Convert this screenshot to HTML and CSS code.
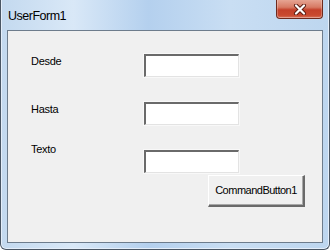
FILE: index.html
```html
<!DOCTYPE html>
<html lang="es">
<head>
  <meta charset="UTF-8">
  <title>UserForm1</title>
  <link rel="stylesheet" href="styles.css">
</head>
<body>
  <div class="window">
    <div class="titlebar">
      <span class="title">UserForm1</span>
      <button class="close" aria-label="Cerrar">
        <svg width="14" height="11" viewBox="0 0 14 11">
          <path d="M3 1.5 L11 9.5 M11 1.5 L3 9.5" stroke="#5a1a10" stroke-width="4" stroke-linecap="round"/>
          <path d="M3 1.5 L11 9.5 M11 1.5 L3 9.5" stroke="#fff" stroke-width="2.2" stroke-linecap="round"/>
        </svg>
      </button>
    </div>

    <div class="client">
      <div class="row">
        <label class="lbl" for="desde">Desde</label>
        <input class="txt" type="text" id="desde">
      </div>
      <div class="row">
        <label class="lbl" for="hasta">Hasta</label>
        <input class="txt" type="text" id="hasta">
      </div>
      <div class="row row-last">
        <label class="lbl lbl-up" for="texto">Texto</label>
        <input class="txt" type="text" id="texto">
      </div>
      <div class="actions">
        <button class="cmd">CommandButton1</button>
      </div>
    </div>
  </div>
</body>
</html>
```

FILE: styles.css
```css
body {
  margin: 0;
  width: 330px;
  height: 250px;
  overflow: hidden;
  background: #fff;
}

.window {
  box-sizing: border-box;
  width: 330px;
  height: 250px;
  border: 1px solid #4a5664;
  border-top: none;
  border-radius: 0 0 6px 6px;
  padding: 0 6px 6px 6px;
  background: linear-gradient(90deg, #c3d9ef 0%, #d9e8f7 22%, #b4d0ee 45%, #c9def3 70%, #bdd6ef 100%);
  box-shadow: inset 1px 0 0 #e4eefa, inset -1px 0 0 #e4eefa, inset 0 -1px 0 #e4eefa;
}

/* title bar */
.titlebar {
  height: 30px;
  display: flex;
  justify-content: space-between;
  align-items: flex-start;
}

.title {
  font-family: "Liberation Sans", Arial, sans-serif;
  font-size: 12.5px;
  letter-spacing: -0.5px;
  color: #000;
  margin: 9px 0 0 1px;
  line-height: 14px;
}

.close {
  box-sizing: border-box;
  width: 47px;
  height: 19px;
  margin-right: 0;
  padding: 0;
  border: 1px solid #6e2a1e;
  border-top: none;
  border-radius: 0 0 4px 4px;
  background: linear-gradient(#e6a493 0%, #d77a64 40%, #c4402a 55%, #c9492f 85%, #d8735b 100%);
  box-shadow: inset 0 -1px 0 rgba(255, 255, 255, 0.35), inset 1px 0 0 rgba(255, 255, 255, 0.25), inset -1px 0 0 rgba(255, 255, 255, 0.25);
  display: flex;
  align-items: center;
  justify-content: center;
}

/* client area */
.client {
  box-sizing: border-box;
  height: 213px;
  border: 1px solid #6d7c8c;
  background: #f0f0f0;
  padding: 23px 0 0 23px;
  font-family: "Liberation Sans", Arial, sans-serif;
  font-size: 11px;
  letter-spacing: -0.3px;
  color: #000;
}

.row {
  display: flex;
  align-items: flex-start;
  margin-bottom: 25px;
}

.row-last {
  margin-bottom: 0;
}

.lbl {
  width: 113px;
  line-height: 13px;
  margin-top: 1px;
}

.lbl-up {
  margin-top: -7px;
}

.txt {
  box-sizing: border-box;
  width: 95px;
  height: 23px;
  margin: 0;
  padding: 0;
  background: #fff;
  border-style: solid;
  border-width: 2px 1px 1px 2px;
  border-color: #6a6a6a #e3e3e3 #e3e3e3 #6a6a6a;
  box-shadow: 0 0 0 1px #f8f8f8;
}

.actions {
  display: flex;
  justify-content: flex-end;
  padding-right: 17px;
  margin-top: 2px;
}

.cmd {
  box-sizing: border-box;
  width: 97px;
  height: 32px;
  padding: 0 0 1px 0;
  background: #f0f0f0;
  border-style: solid;
  border-width: 1px 2px 2px 1px;
  border-color: #ffffff #6a6a6a #6a6a6a #ffffff;
  box-shadow: inset -1px -1px 0 #a8a8a8;
  font-family: "Liberation Sans", Arial, sans-serif;
  font-size: 11px;
  letter-spacing: -0.5px;
  color: #000;
}
```
